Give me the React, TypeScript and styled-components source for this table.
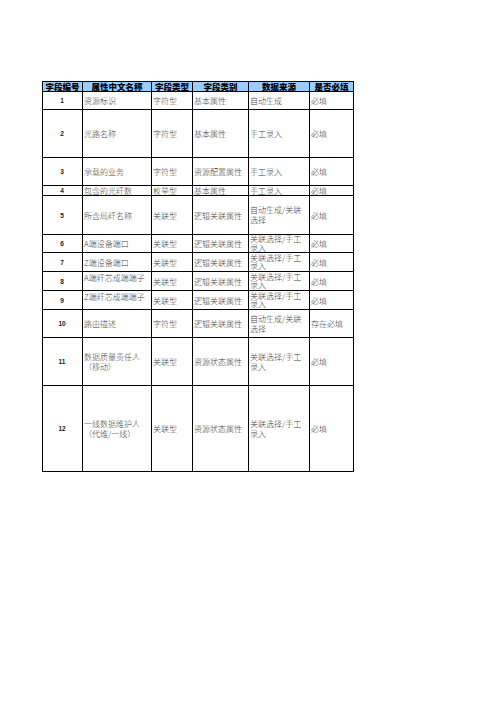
import React from "react";
import styled, { createGlobalStyle } from "styled-components";

const GlobalStyle = createGlobalStyle`
  html, body { margin: 0; padding: 0; background: #ffffff; }
  body { width: 496px; height: 702px; overflow: hidden; }
`;

const Page = styled.div`
  width: 496px;
  height: 702px;
  padding: 81px 0 0 42px;
  box-sizing: border-box;
  background: #ffffff;
`;

const Grid = styled.div`
  display: grid;
  grid-template-columns: 40px 69px 41px 56px 61px 44px;
  grid-template-rows: 10px 18px 48px 28px 10px 39px 18px 19px 19px 19px 28px 48px 86px;
  width: max-content;
  border-left: 1px solid #000;
  border-top: 1px solid #000;
  font-family: "Noto Sans CJK SC", "Liberation Serif", serif;
`;

const HeadCell = styled.div`
  display: flex;
  align-items: center;
  justify-content: center;
  box-sizing: border-box;
  background: #99ccff;
  border-right: 1px solid #000;
  border-bottom: 1px solid #000;
  font-size: 8.5px;
  line-height: 9px;
  font-weight: 900;
  color: #000;
  white-space: nowrap;
  overflow: visible;
`;

const Cell = styled.div<{ $center?: boolean; $top?: boolean }>`
  display: flex;
  align-items: ${(p) => (p.$top ? "flex-start" : "center")};
  justify-content: ${(p) => (p.$center ? "center" : "flex-start")};
  box-sizing: border-box;
  padding: ${(p) => (p.$top ? "1px 2px 0 1px" : "0 2px 0 1px")};
  border-right: 1px solid #000;
  border-bottom: 1px solid #000;
  font-size: 8px;
  line-height: 9px;
  font-weight: 300;
  color: #444;
  white-space: nowrap;
  overflow: visible;
  min-height: 0;
`;

const NumCell = styled(Cell)`
  font-family: "Liberation Sans", Arial, sans-serif;
  font-weight: 700;
  font-size: 6.5px;
  color: #222;
`;

const Lines = styled.span`
  display: flex;
  flex-direction: column;
`;

const Line = styled.span<{ $tight?: boolean }>`
  display: block;
  height: ${(p) => (p.$tight ? "8.5px" : "10px")};
  line-height: ${(p) => (p.$tight ? "8.5px" : "10px")};
`;

type Row = {
  no: string;
  name: string[];
  type: string;
  cat: string;
  src: string[];
  req: string;
  nameTop?: boolean;
  tight?: boolean;
};

const headers = ["字段编号", "属性中文名称", "字段类型", "字段类别", "数据来源", "是否必填"];

const rows: Row[] = [
  { no: "1", name: ["资源标识"], type: "字符型", cat: "基本属性", src: ["自动生成"], req: "必填" },
  { no: "2", name: ["光路名称"], type: "字符型", cat: "基本属性", src: ["手工录入"], req: "必填" },
  { no: "3", name: ["承载的业务"], type: "字符型", cat: "资源配置属性", src: ["手工录入"], req: "必填" },
  { no: "4", name: ["包含的光纤数"], type: "枚举型", cat: "基本属性", src: ["手工录入"], req: "必填" },
  { no: "5", name: ["所含局纤名称"], type: "关联型", cat: "逻辑关联属性", src: ["自动生成/关联", "选择"], req: "必填" },
  { no: "6", name: ["A端设备端口"], type: "关联型", cat: "逻辑关联属性", src: ["关联选择/手工", "录入"], req: "必填", tight: true },
  { no: "7", name: ["Z端设备端口"], type: "关联型", cat: "逻辑关联属性", src: ["关联选择/手工", "录入"], req: "必填", tight: true },
  { no: "8", name: ["A端纤芯成端端子"], type: "关联型", cat: "逻辑关联属性", src: ["关联选择/手工", "录入"], req: "必填", nameTop: true, tight: true },
  { no: "9", name: ["Z端纤芯成端端子"], type: "关联型", cat: "逻辑关联属性", src: ["关联选择/手工", "录入"], req: "必填", nameTop: true, tight: true },
  { no: "10", name: ["路由描述"], type: "字符型", cat: "逻辑关联属性", src: ["自动生成/关联", "选择"], req: "存在必填" },
  { no: "11", name: ["数据质量责任人", "（移动）"], type: "关联型", cat: "资源状态属性", src: ["关联选择/手工", "录入"], req: "必填" },
  { no: "12", name: ["一线数据维护人", "（代维/一线）"], type: "关联型", cat: "资源状态属性", src: ["关联选择/手工", "录入"], req: "必填" },
];

const Multi: React.FC<{ lines: string[]; tight?: boolean }> = ({ lines, tight }) =>
  lines.length === 1 ? (
    <span>{lines[0]}</span>
  ) : (
    <Lines>
      {lines.map((l, i) => (
        <Line key={i} $tight={tight}>
          {l}
        </Line>
      ))}
    </Lines>
  );

export default function App() {
  return (
    <>
      <GlobalStyle />
      <Page>
        <Grid>
          {headers.map((h) => (
            <HeadCell key={h}>{h}</HeadCell>
          ))}
          {rows.map((r) => (
            <React.Fragment key={r.no}>
              <NumCell $center>{r.no}</NumCell>
              <Cell $top={r.nameTop}>
                <Multi lines={r.name} />
              </Cell>
              <Cell>{r.type}</Cell>
              <Cell>{r.cat}</Cell>
              <Cell>
                <Multi lines={r.src} tight={r.tight} />
              </Cell>
              <Cell>{r.req}</Cell>
            </React.Fragment>
          ))}
        </Grid>
      </Page>
    </>
  );
}
